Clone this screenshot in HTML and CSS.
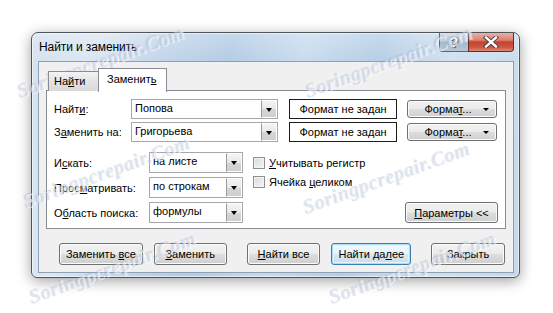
FILE: index.html
```html
<!DOCTYPE html>
<html lang="ru">
<head>
<meta charset="utf-8">
<title>Найти и заменить</title>
<link rel="stylesheet" href="styles.css">
</head>
<body>
<div class="desk">
  <div class="window">
    <div class="titlebar">
      <span class="title">Найти и заменить</span>
      <div class="caption">
        <span class="cbtn help">?</span>
        <span class="cbtn close">
          <svg width="16" height="12" viewBox="0 0 16 12"><path d="M3 1.5 L13 10.5 M13 1.5 L3 10.5" stroke="#4a3a3a" stroke-width="4.2" stroke-linecap="square"/><path d="M3 1.5 L13 10.5 M13 1.5 L3 10.5" stroke="#fff" stroke-width="2.4" stroke-linecap="square"/></svg>
        </span>
      </div>
    </div>
    <div class="client">
      <div class="tabs">
        <div class="tab">На<u>й</u>ти</div>
        <div class="tab active">Заменит<u>ь</u></div>
      </div>
      <div class="panel">
        <div class="row">
          <span class="lbl">Найт<u>и</u>:</span>
          <span class="combo wide"><span class="val">Попова</span><span class="drop"></span></span>
          <span class="status">Формат не задан</span>
          <span class="btn fmt"><span>Форма<u>т</u>...</span><span class="tri"></span></span>
        </div>
        <div class="row">
          <span class="lbl">З<u>а</u>менить на:</span>
          <span class="combo wide"><span class="val">Григорьева</span><span class="drop"></span></span>
          <span class="status">Формат не задан</span>
          <span class="btn fmt"><span>Форма<u>т</u>...</span><span class="tri"></span></span>
        </div>
        <div class="lower">
          <div class="opts">
            <span class="lbl2">И<u>с</u>кать:</span>
            <span class="combo"><span class="val">на листе</span><span class="drop"></span></span>
            <span class="lbl2">Прос<u>м</u>атривать:</span>
            <span class="combo"><span class="val">по строкам</span><span class="drop"></span></span>
            <span class="lbl2">О<u>б</u>ласть поиска:</span>
            <span class="combo"><span class="val">формулы</span><span class="drop"></span></span>
          </div>
          <div class="checks">
            <label class="chk"><span class="box"></span><span><u>У</u>читывать регистр</span></label>
            <label class="chk"><span class="box"></span><span>Ячейка <u>ц</u>еликом</span></label>
          </div>
          <span class="btn params"><span><u>П</u>араметры &lt;&lt;</span></span>
        </div>
      </div>
      <div class="actions">
        <span class="btn b1"><span>Заменить <u>в</u>се</span></span>
        <span class="btn b2"><span><u>З</u>аменить</span></span>
        <span class="btn b3"><span><u>Н</u>айти все</span></span>
        <span class="btn b4 default"><span>Найти да<u>л</u>ее</span></span>
        <span class="btn b5"><span>Закрыть</span></span>
      </div>
    </div>
  </div>
  <div class="marks">
    <span class="wm w1">Soringpcrepair.Com</span>
    <span class="wm w2">Soringpcrepair.Com</span>
    <span class="wm w3">Soringpcrepair.Com</span>
    <span class="wm w4">Soringpcrepair.Com</span>
    <span class="wm w5">Soringpcrepair.Com</span>
    <span class="wm w6">Soringpcrepair.Com</span>
  </div>
</div>
</body>
</html>
```
FILE: styles.css
```css
* { box-sizing: border-box; }
html, body { margin: 0; background: #fff; }
body {
  font-family: "Liberation Sans", Arial, sans-serif;
  font-size: 11px;
  color: #000;
  width: 553px;
  height: 313px;
  overflow: hidden;
}
u { text-decoration: underline; text-underline-offset: 1px; }
.desk {
  position: relative;
  width: 553px;
  height: 313px;
  padding: 32px 0 0 31px;
}
.window {
  width: 489px;
  height: 246px;
  border: 1px solid #4f5458;
  border-radius: 7px 7px 6px 6px;
  padding: 0 5px 4px 6px;
  display: flex;
  flex-direction: column;
  background:
    linear-gradient(180deg, rgba(255,255,255,0.25), rgba(255,255,255,0) 30px),
    linear-gradient(100deg, #d4e1ee 0%, #dbe6f2 12%, #c3d6ea 24%, #b3cbe5 38%, #c8dbee 52%, #b5cde6 66%, #d0e0f0 80%, #c6d9ec 100%);
  box-shadow: 0 3px 14px rgba(0,0,0,0.38), inset 0 0 0 1px rgba(255,255,255,0.55);
}
.titlebar {
  height: 28px;
  display: flex;
  align-items: flex-start;
}
.title {
  font-size: 12px;
  padding: 7px 0 0 1px;
  color: #000;
  letter-spacing: -0.1px;
}
.caption {
  margin-left: auto;
  display: flex;
  height: 19px;
}
.cbtn {
  height: 19px;
  display: flex;
  align-items: center;
  justify-content: center;
  border: 1px solid #5d6670;
  border-top: none;
}
.help {
  width: 29px;
  border-right: none;
  border-radius: 0 0 0 4px;
  background: linear-gradient(180deg, #d7e1ec 0%, #c1cfdd 45%, #a7b9cc 50%, #b6c8da 100%);
  color: #fff;
  font: bold 14px "Liberation Sans", sans-serif;
  text-shadow: 0 0 1px #333, 0 0 1px #333, 1px 1px 1px #555;
}
.close {
  width: 46px;
  border-color: #6e2b22;
  border-radius: 0 0 4px 0;
  background: linear-gradient(180deg, #eab2a6 0%, #d9806f 40%, #c4422f 50%, #cb5a44 80%, #dc8a73 100%);
}
.client {
  height: 212px;
  background: #f0f0f0;
  border: 1px solid #8ea0b4;
  padding: 6px 8px 0 7px;
}
.tabs {
  display: flex;
  align-items: flex-end;
  padding-left: 2px;
  height: 23px;
  position: relative;
  z-index: 1;
  margin-bottom: -1px;
}
.tab {
  height: 20px;
  width: 50px;
  border: 1px solid #898c95;
  border-bottom: none;
  border-right: none;
  background: linear-gradient(180deg, #f3f3f3, #e3e3e3 50%, #d9d9d9);
  padding: 3px 0 0 5px;
}
.tab.active {
  height: 24px;
  width: 69px;
  border-right: 1px solid #898c95;
  background: #fff;
  padding: 4px 0 0 8px;
  margin-bottom: -1px;
}
.panel {
  width: 460px;
  height: 139px;
  background: #fff;
  border: 1px solid #898c95;
  padding: 8px 7px 5px 7px;
  display: flex;
  flex-direction: column;
}
.row {
  display: flex;
  align-items: center;
  height: 20px;
  margin-bottom: 3px;
}
.lbl { width: 77px; }
.combo {
  display: flex;
  align-items: stretch;
  height: 20px;
  border: 1px solid #a5a7ab;
  background: #fff;
}
.combo.wide { width: 147px; }
.combo .val {
  flex: 1;
  padding: 2px 0 0 3px;
}
.drop {
  width: 16px;
  border: 1px solid #fff;
  border-left: 1px solid #9a9a9a;
  background: linear-gradient(180deg, #f4f4f4 0%, #e8e8e8 50%, #d6d6d6 52%, #cfcfcf 100%);
  position: relative;
}
.drop::after {
  content: "";
  position: absolute;
  left: 4px;
  top: 7px;
  border-left: 3.5px solid transparent;
  border-right: 3.5px solid transparent;
  border-top: 4px solid #000;
}
.status {
  margin-left: 11px;
  width: 108px;
  height: 20px;
  border: 1px solid #1c1c1c;
  text-align: center;
  padding-top: 3px;
}
.btn {
  display: inline-flex;
  align-items: center;
  justify-content: center;
  border: 1px solid #707070;
  border-radius: 3px;
  background: linear-gradient(180deg, #f2f2f2 0%, #ebebeb 48%, #dddddd 52%, #cfcfcf 100%);
  box-shadow: inset 0 0 0 1px #fbfbfb;
  white-space: nowrap;
}
.fmt {
  margin-left: 10px;
  width: 90px;
  height: 18px;
  position: relative;
  padding-right: 8px;
}
.tri {
  position: absolute;
  right: 7px;
  top: 7px;
  border-left: 3px solid transparent;
  border-right: 3px solid transparent;
  border-top: 3px solid #000;
}
.lower {
  display: flex;
  margin-top: 7px;
  flex: 1;
}
.opts {
  display: grid;
  grid-template-columns: 95px 94px;
  grid-auto-rows: 21px;
  row-gap: 4px;
  align-items: center;
}
.opts .combo { height: 21px; }
.checks {
  margin-left: 10px;
  padding-top: 4px;
  display: flex;
  flex-direction: column;
  gap: 6px;
}
.chk {
  display: flex;
  align-items: center;
  gap: 4px;
  height: 13px;
}
.box {
  width: 12px;
  height: 12px;
  border: 1px solid #8f8f8f;
  background: linear-gradient(135deg, #d8d8d8, #f6f6f6);
  box-shadow: inset 0 0 0 1px #f4f4f4;
}
.params {
  margin-left: auto;
  align-self: flex-end;
  width: 93px;
  height: 21px;
}
.actions {
  display: flex;
  padding: 14px 0 0 13px;
}
.actions .btn { height: 22px; }
.b1 { width: 84px; }
.b2 { width: 73px; margin-left: 11px; }
.b3 { width: 74px; margin-left: 20px; }
.b4 { width: 80px; margin-left: 11px; }
.b5 { width: 74px; margin-left: 20px; }
.default {
  border-color: #3c7fb1;
  box-shadow: inset 0 0 0 1px #a9dcf6, inset 0 0 0 2px #e4f4fc;
  background: linear-gradient(180deg, #f2f8fc 0%, #e9f3f9 48%, #dbe8f0 52%, #cfdce6 100%);
}
.marks {
  position: absolute;
  inset: 0;
  pointer-events: none;
}
.wm {
  position: absolute;
  font-family: "Liberation Serif", serif;
  font-style: italic;
  font-weight: bold;
  font-size: 20px;
  letter-spacing: 0.5px;
  color: rgba(185, 198, 222, 0.35);
  text-shadow: 1px 1px 0 rgba(255,255,255,0.6), -1px -1px 0 rgba(140,155,185,0.2);
  transform: rotate(-20deg);
  transform-origin: 0 100%;
  white-space: nowrap;
}
.w1 { left: 22px; top: 80px; }
.w2 { left: 310px; top: 80px; }
.w3 { left: 28px; top: 190px; }
.w4 { left: 308px; top: 196px; }
.w5 { left: 34px; top: 286px; }
.w6 { left: 334px; top: 286px; }
```
